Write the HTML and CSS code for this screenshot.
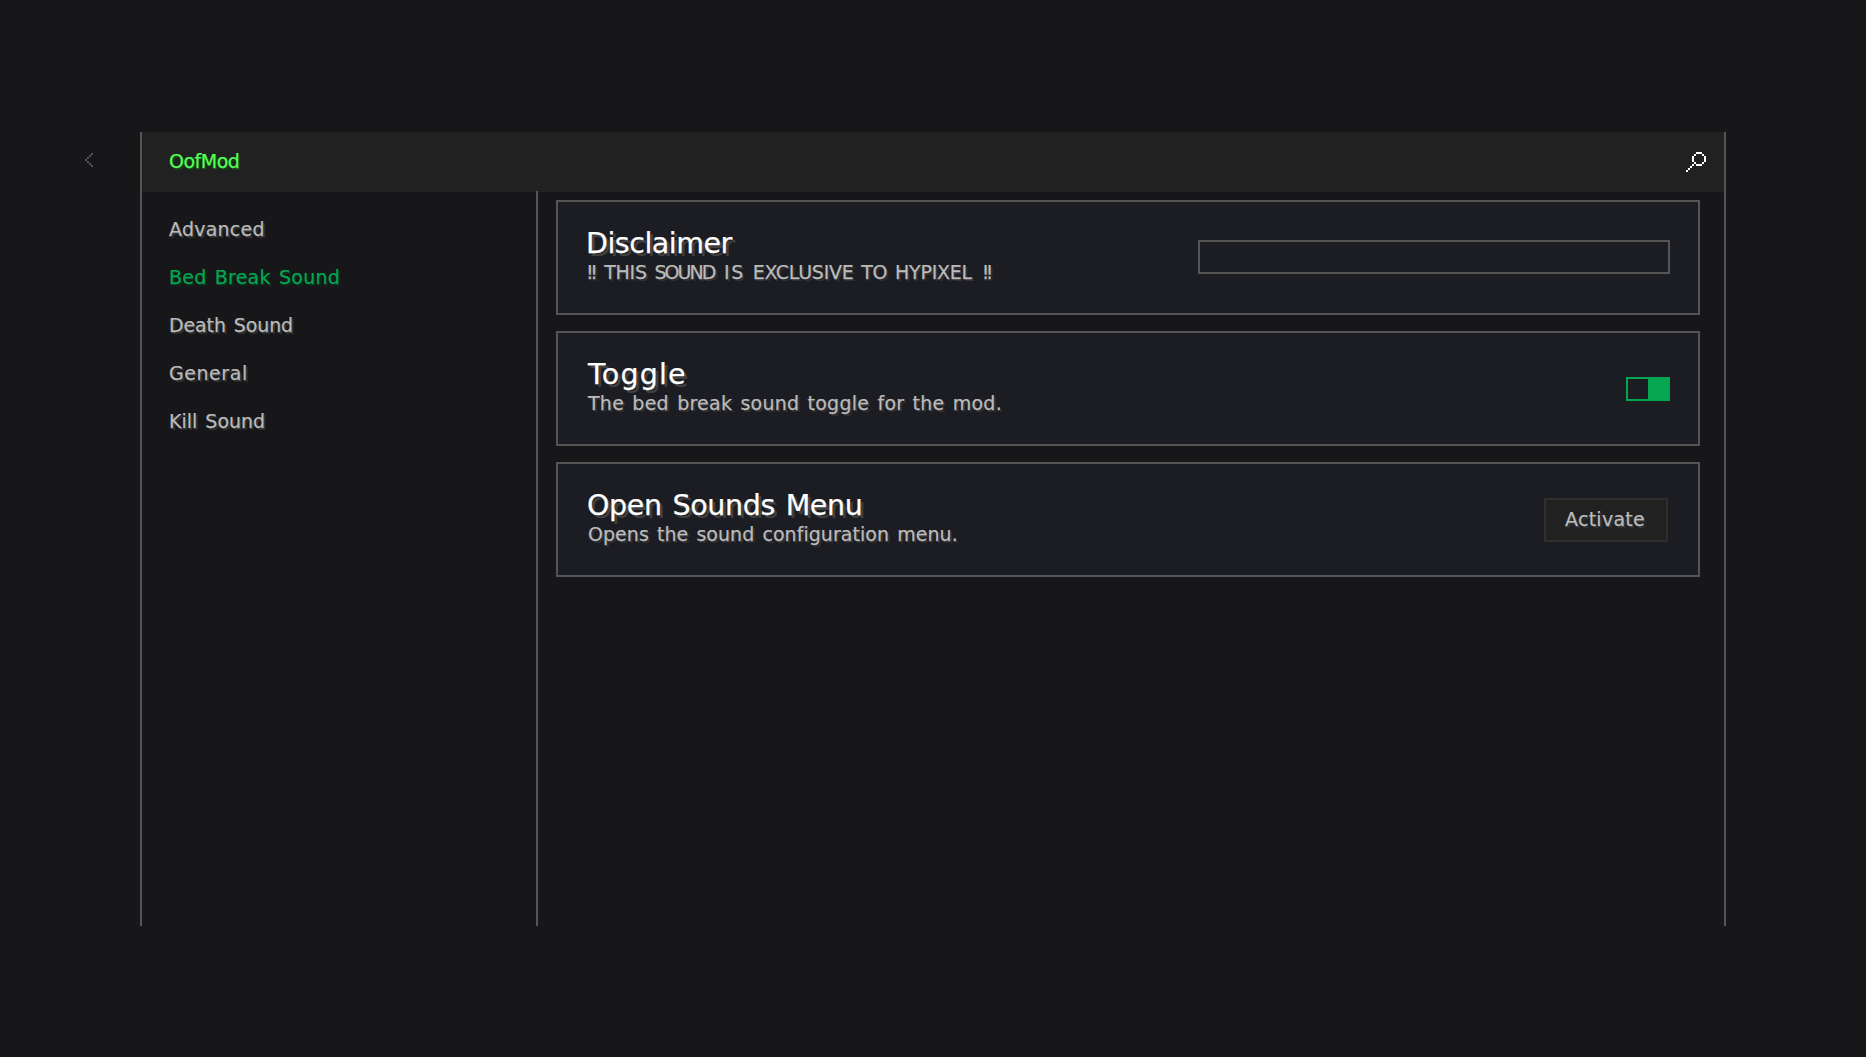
FILE: index.html
```
<!DOCTYPE html>
<html lang="en">
<head>
<meta charset="utf-8">
<title>OofMod</title>
<link rel="stylesheet" href="styles.css">
</head>
<body>
<div class="screen">
  <button class="back" aria-label="Back">
    <svg width="8" height="14" viewBox="0 0 4 7" shape-rendering="crispEdges"><path fill="#555" d="M3 0h1v1H3zM2 1h1v1H2zM1 2h1v1H1zM0 3h1v1H0zM1 4h1v1H1zM2 5h1v1H2zM3 6h1v1H3z"/></svg>
  </button>
  <div class="panel">
    <header class="header">
      <h1 class="brand">OofMod</h1>
      <svg width="20" height="20" viewBox="0 0 10 10" shape-rendering="crispEdges"><path fill="#fff" d="M5 0h3v1H5zM4 1h1v1H4zM8 1h1v1H8zM3 2h1v3H3zM9 2h1v3H9zM4 5h1v1H4zM8 5h1v1H8zM5 6h3v1H5zM3 6h1v1H3zM2 7h1v1H2zM1 8h1v1H1zM0 9h1v1H0z"/></svg>
    </header>
    <div class="body">
      <nav class="nav">
        <a class="wide">Advanced</a>
        <a class="wide active">Bed Break Sound</a>
        <a class="tight">Death Sound</a>
        <a class="wider">General</a>
        <a>Kill Sound</a>
      </nav>
      <main class="list">
        <section class="card">
          <div class="info">
            <h2 class="title-disclaimer">Disclaimer</h2>
            <p class="caps"><span class="bang">!!</span> THIS <span class="narrow">SOUND</span> <span class="spread">IS</span> EXCLUSIVE TO HYPIXEL <span class="bang">!!</span></p>
          </div>
          <div class="field"></div>
        </section>
        <section class="card">
          <div class="info">
            <h2 class="title-toggle">Toggle</h2>
            <p class="wide">The bed break sound toggle for the mod.</p>
          </div>
          <div class="switch"></div>
        </section>
        <section class="card">
          <div class="info">
            <h2 class="title-sounds">Open Sounds Menu</h2>
            <p class="menu-text">Opens the sound configuration menu.</p>
          </div>
          <button class="activate wide">Activate</button>
        </section>
      </main>
    </div>
  </div>
</div>
</body>
</html>
```
FILE: styles.css
```
* { box-sizing: border-box; }
body {
  margin: 0;
  background: #171719;
  color: #bbb;
  font: 19px/24px "DejaVu Sans", sans-serif;
  word-spacing: 2px;
  text-shadow: 2px 2px 0 #303032;
  -webkit-text-stroke: 0.25px currentColor;
}
h1, h2, p { margin: 0; font-weight: 400; white-space: nowrap; }
button {
  padding: 0;
  border: 0;
  background: none;
  font: inherit;
  color: inherit;
  word-spacing: inherit;
  text-shadow: inherit;
}
.wide { letter-spacing: 0.24px; }
.wider { letter-spacing: 0.55px; }
.tight { letter-spacing: -0.12px; }

.screen { display: flex; height: 1057px; padding: 132px 0 0 85px; }
.back { display: flex; width: 55px; height: 14px; margin-top: 21px; }
.panel {
  display: flex;
  flex-direction: column;
  width: 1586px;
  height: 794px;
  border: solid #555;
  border-width: 0 2px;
}
.header {
  display: flex;
  flex: none;
  align-items: center;
  justify-content: space-between;
  height: 60px;
  padding: 0 18px 0 27px;
  background: #212121;
}
.brand {
  padding-bottom: 2px;
  font-size: 19px;
  line-height: 24px;
  letter-spacing: -0.5px;
  color: #5f5;
  text-shadow: 2px 2px 0 #153f15;
}
.body { display: flex; flex: 1; margin-top: -1px; }
.nav {
  display: flex;
  flex-direction: column;
  gap: 24px;
  width: 396px;
  padding: 26px 27px;
  border-right: 2px solid #555;
}
.nav .active { color: #05a552; text-shadow: 2px 2px 0 #0b2b1c; }

.list { display: flex; flex: 1; flex-direction: column; gap: 16px; padding: 9px 24px 0 18px; }
.card {
  display: flex;
  align-items: center;
  justify-content: space-between;
  height: 115px;
  padding: 0 28px 0 30px;
  border: 2px solid #555;
  background: #1c1d22;
}
.info { height: 100%; padding-top: 26px; }
.info h2 {
  font-size: 28.5px;
  line-height: 32px;
  color: #fff;
  text-shadow: 3px 3px 0 #3f3f3f;
}
.title-disclaimer { margin-left: -2px; letter-spacing: -0.5px; }
.title-toggle { letter-spacing: 1.2px; }
.title-sounds { margin-left: -1px; letter-spacing: -0.35px; }
.caps { letter-spacing: -0.26px; }
.narrow { letter-spacing: -2px; }
.spread { margin-left: 2px; letter-spacing: 1.6px; }
.bang { letter-spacing: -3.4px; }
.bang:first-child { margin: 0 2px 0 -2px; }
.bang:last-child { margin-left: 2px; }
.menu-text { letter-spacing: 0.05px; }

.field { width: 472px; height: 34px; margin-top: -1px; border: 2px solid #555; }
.switch { width: 44px; height: 24px; border: 2px solid #05a552; border-right-width: 22px; }
.activate {
  width: 124px;
  height: 44px;
  margin-right: 2px;
  padding: 0 2px 2px 0;
  border: 2px solid #2f2f30;
  border-radius: 1px;
  background: #212121;
}
```
